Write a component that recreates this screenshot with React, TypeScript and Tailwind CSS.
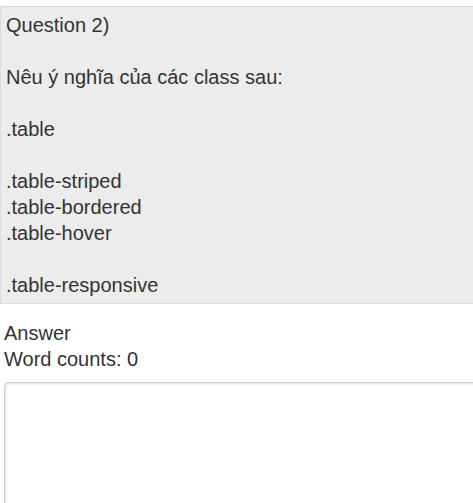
import { FC } from 'react';

const lines = [
  'Question 2)',
  '',
  'Nêu ý nghĩa của các class sau:',
  '',
  '.table',
  '',
  '.table-striped',
  '.table-bordered',
  '.table-hover',
  '',
  '.table-responsive',
];

const App: FC = () => {
  return (
    <div className="w-full overflow-hidden font-['Liberation_Sans',Arial,sans-serif] text-[20px] leading-[26px] text-[#333]">
      <div className="mt-[6px] border-y border-l border-[#dcdcdc] bg-[#ececec] px-[5px] py-[5px]">
        {lines.map((line, i) => (
          <div key={i} className="h-[26px] whitespace-pre">
            {line}
          </div>
        ))}
      </div>
      <div className="mt-[16px] pl-[4px]">
        <div>Answer</div>
        <div>Word counts: 0</div>
        <textarea className="mt-[10px] block h-[150px] w-[calc(100%+10px)] resize-none rounded-[4px] border border-[#d2d2d2] shadow-[inset_1px_1px_2px_rgba(0,0,0,0.12)] outline-none" />
      </div>
    </div>
  );
};

export default App;
